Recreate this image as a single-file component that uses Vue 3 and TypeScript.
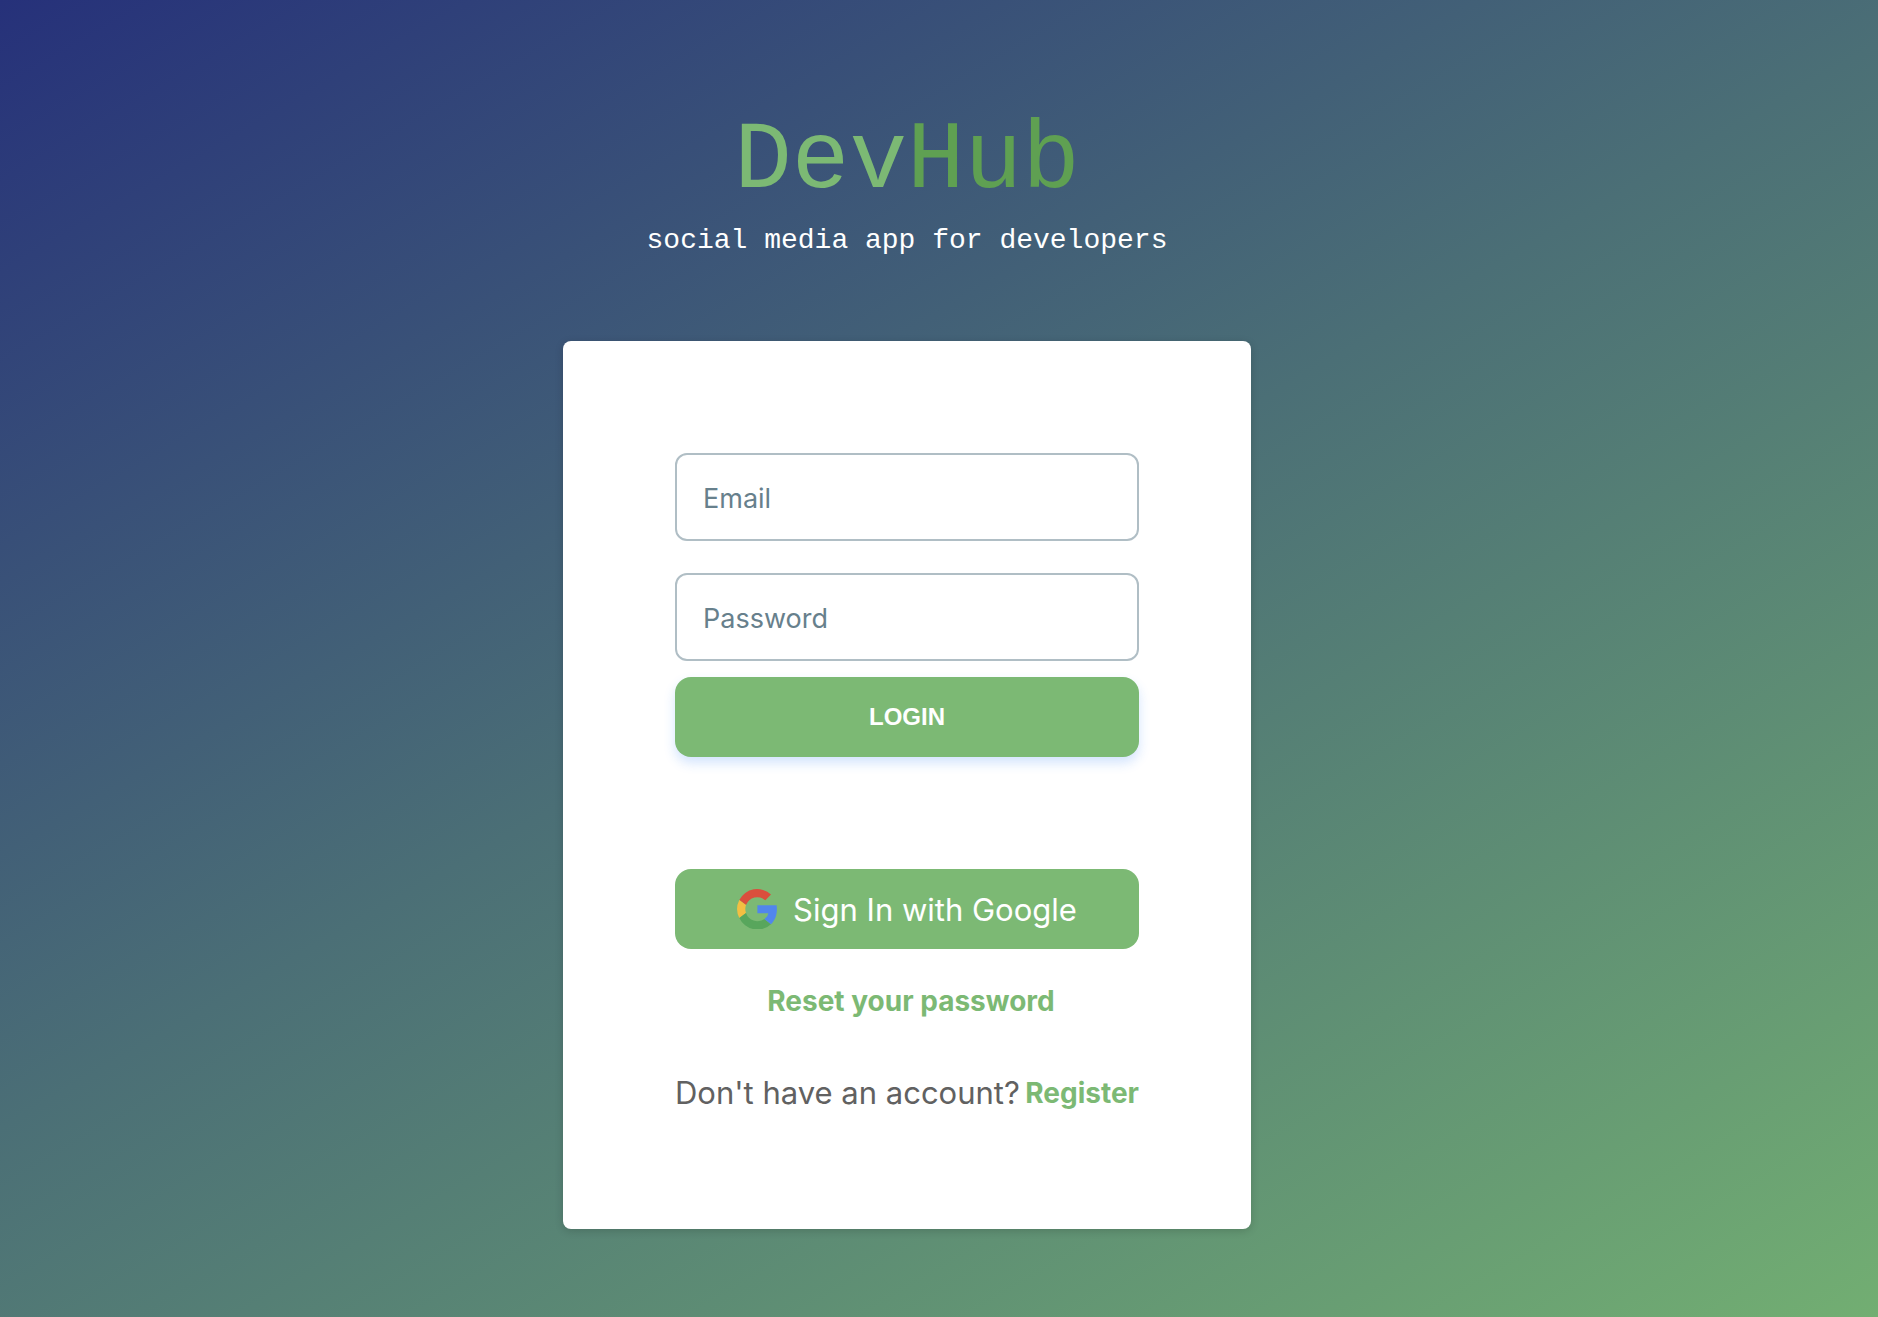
<script setup lang="ts">
import { ref } from 'vue'

const email = ref('')
const password = ref('')
</script>

<template>
  <main class="page">
    <header class="brand">
      <h1 class="title"><span class="title-dev">Dev</span><span class="title-hub">Hub</span></h1>
      <p class="tagline">social media app for developers</p>
    </header>

    <section class="card">
      <form class="form" @submit.prevent>
        <input v-model="email" class="field" type="email" placeholder="Email" aria-label="Email" />
        <input v-model="password" class="field" type="password" placeholder="Password" aria-label="Password" />
        <button class="btn btn-login" type="submit">LOGIN</button>
      </form>

      <button class="btn btn-google" type="button">
        <svg class="google" viewBox="0 0 40 40" aria-hidden="true">
          <path fill="#da4f3d" d="M2.300 11A20 20 0 0 1 34 5.600L28.300 11.300A12 12 0 0 0 9 16Z" />
          <path fill="#f3bf42" d="M2.300 11L9 16A12 12 0 0 0 9 24L2.300 29A20 20 0 0 1 2.300 11Z" />
          <path fill="#58a65c" d="M2.300 29L9 24A12 12 0 0 0 27.300 30L34 35.200A20 20 0 0 1 2.300 29Z" />
          <path fill="#5186ec" d="M20.400 16.300H39.600C40.600 23.500 39 30.500 34 35.200L27.300 30C29.500 28.500 30.900 26.500 31.300 24.200H20.400Z" />
        </svg>
        <span>Sign In with Google</span>
      </button>

      <a class="link reset" href="#reset">Reset your password</a>

      <p class="signup">
        <span>Don't have an account?</span>
        <a class="link" href="#register">Register</a>
      </p>
    </section>
  </main>
</template>

<style>
body {
  margin: 0;
}
</style>

<style scoped>
.page {
  box-sizing: border-box;
  min-height: 100vh;
  padding: 113px 64px 88px 0;
  display: flex;
  flex-direction: column;
  align-items: center;
  background: linear-gradient(150deg, #26317a, #4b6f76 47%, #72ae72);
  font-family: Inter, 'Liberation Sans', sans-serif;
}

.brand {
  display: flex;
  flex-direction: column;
  align-items: center;
  margin-bottom: 84px;
  font-family: 'Liberation Mono', monospace;
}

.title {
  margin: 0;
  font-size: 96px;
  line-height: 98px;
  font-weight: 400;
}

.title-dev {
  color: #7cb974;
}

.title-hub {
  color: #5fa052;
}

.tagline {
  margin: 14px 0 0;
  font-size: 28px;
  line-height: 32px;
  color: #fff;
}

.card {
  box-sizing: border-box;
  width: 688px;
  max-width: 100%;
  padding: 112px;
  display: flex;
  flex-direction: column;
  background: #fff;
  border-radius: 8px;
  box-shadow: 0 2px 8px rgba(0, 0, 0, 0.16);
}

.form {
  display: flex;
  flex-direction: column;
}

.field {
  box-sizing: border-box;
  width: 100%;
  height: 88px;
  margin: 0 0 32px;
  padding: 2px 26px 0;
  border: 2px solid #b0bec5;
  border-radius: 12px;
  background: #fff;
  color: #37474f;
  font-family: inherit;
  font-size: 27px;
}

.field + .field {
  margin-bottom: 16px;
}

.field::placeholder {
  color: #67808c;
  opacity: 1;
}

.btn {
  height: 80px;
  padding: 0;
  border: 0;
  border-radius: 16px;
  background: #7cb974;
  color: #fff;
  cursor: pointer;
}

.btn-login {
  font-family: 'Liberation Sans', Arial, sans-serif;
  font-size: 24px;
  font-weight: 700;
  box-shadow: 0 6px 12px rgba(33, 120, 243, 0.2);
}

.btn-google {
  margin-top: 112px;
  display: flex;
  align-items: center;
  justify-content: center;
  gap: 16px;
  font-family: inherit;
  font-size: 31px;
}

.google {
  width: 40px;
  height: 40px;
}

.link {
  color: #7cb974;
  font-size: 28px;
  font-weight: 700;
  text-decoration: none;
}

.reset {
  align-self: center;
  margin-top: 32px;
  padding-left: 8px;
  line-height: 40px;
}

.signup {
  margin: 48px 0 0;
  display: flex;
  align-items: center;
  justify-content: space-between;
  white-space: nowrap;
  color: #616161;
  font-size: 31px;
  line-height: 48px;
}
</style>
